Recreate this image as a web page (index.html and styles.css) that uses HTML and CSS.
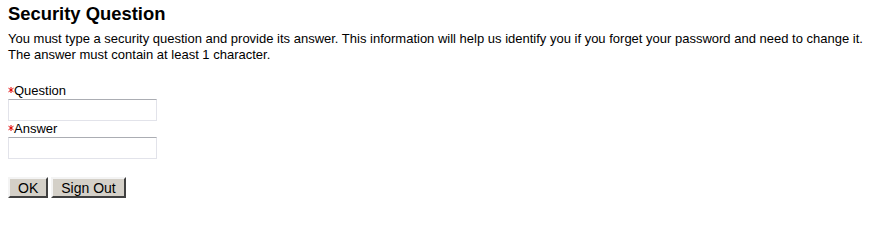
FILE: index.html
```html
<!DOCTYPE html>
<html>
<head>
<meta charset="utf-8">
<link rel="stylesheet" href="styles.css">
</head>
<body>
<h1 class="title">Security Question</h1>
<p class="intro">You must type a security question and provide its answer. This information will help us identify you if you forget your password and need to change it.<br>The answer must contain at least 1 character.</p>
<form class="form">
  <label class="label"><svg class="req" width="6" height="6" viewBox="0 0 6 6"><path d="M3 0V6M0.5 1.2L5.5 4.8M0.5 4.8L5.5 1.2" stroke="#e00000" stroke-width="1" fill="none"/></svg>Question</label>
  <input class="field" type="text">
  <label class="label"><svg class="req" width="6" height="6" viewBox="0 0 6 6"><path d="M3 0V6M0.5 1.2L5.5 4.8M0.5 4.8L5.5 1.2" stroke="#e00000" stroke-width="1" fill="none"/></svg>Answer</label>
  <input class="field" type="password">
  <div class="buttons">
    <button class="btn" type="button">OK</button><button class="btn" type="button">Sign Out</button>
  </div>
</form>
</body>
</html>
```
FILE: styles.css
```css
html, body {
  margin: 0;
  padding: 0;
  background: #ffffff;
}
body {
  padding: 3px 8px;
  font-family: "Liberation Sans", Arial, sans-serif;
  font-size: 13px;
  color: #000;
}
.title {
  margin: 0;
  font-size: 18.4px;
  font-weight: bold;
  line-height: 22px;
}
.intro {
  margin: 6px 0 0 0;
  font-size: 13px;
  line-height: 16px;
  white-space: nowrap;
}
.form {
  display: flex;
  flex-direction: column;
  align-items: flex-start;
  margin-top: 20px;
}
.label {
  display: block;
  font-size: 13px;
  line-height: 16px;
}
.req {
  display: inline-block;
  vertical-align: 2px;
}
.field {
  box-sizing: border-box;
  width: 149px;
  height: 22px;
  margin: 0;
  padding: 1px 2px;
  border: 1px solid #e2e3ea;
  border-top-color: #abadb3;
  background: #fff;
  font-family: "Liberation Sans", Arial, sans-serif;
  font-size: 13px;
}
.buttons {
  display: flex;
  gap: 3px;
  margin-top: 18px;
}
.btn {
  box-sizing: border-box;
  height: 21px;
  padding: 0 8px;
  background: #d4d0c8;
  border: 2px solid;
  border-color: #f4f4f4 #404040 #404040 #f4f4f4;
  font-family: "Liberation Sans", Arial, sans-serif;
  font-size: 14px;
  line-height: 16px;
  color: #000;
}
```
